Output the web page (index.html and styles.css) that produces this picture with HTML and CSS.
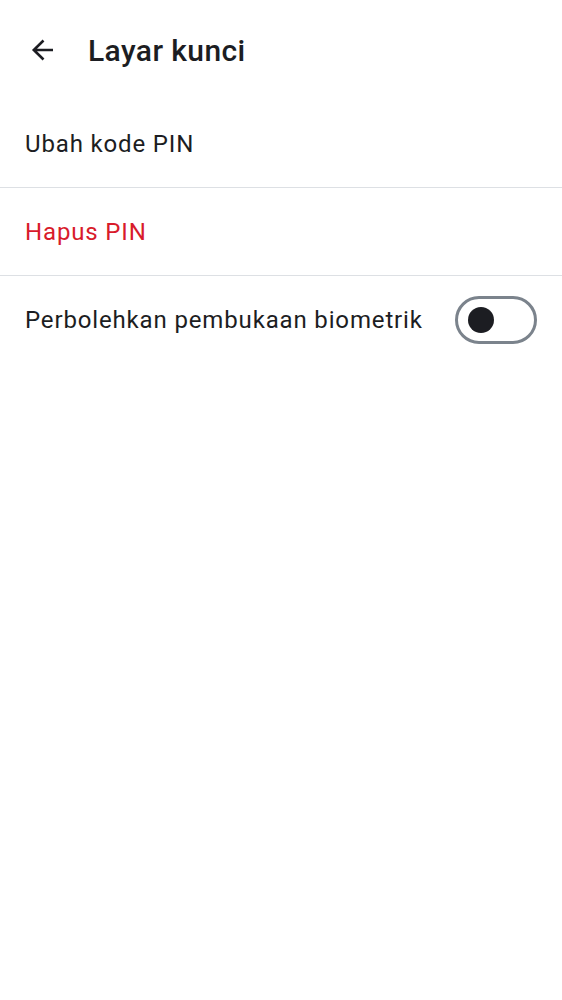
FILE: index.html
```html
<!DOCTYPE html>
<html lang="id">
<head>
<meta charset="utf-8">
<link rel="stylesheet" href="styles.css">
</head>
<body>
<header class="appbar">
  <button class="back" aria-label="Kembali">
    <svg width="24" height="24" viewBox="0 0 24 24"><path d="M22 12H3.5M12.5 2.5L2.8 12l9.7 9.5" fill="none" stroke="#1c1d22" stroke-width="2.6"/></svg>
  </button>
  <h1 class="title">Layar kunci</h1>
</header>
<ul class="list">
  <li class="row">Ubah kode PIN</li>
  <li class="row danger">Hapus PIN</li>
  <li class="row switch-row">
    <span>Perbolehkan pembukaan biometrik</span>
    <span class="switch"><span class="knob"></span></span>
  </li>
</ul>
</body>
</html>
```
FILE: styles.css
```css
* { box-sizing: border-box; }
body {
  margin: 0;
  background: #fff;
  font-family: Roboto, "Noto Sans", sans-serif;
  color: #1c1d22;
}
.appbar {
  height: 100px;
  display: flex;
  align-items: center;
  padding-left: 31px;
  gap: 33px;
}
.back {
  border: 0;
  background: none;
  padding: 0;
  width: 24px;
  height: 24px;
  display: flex;
}
.title {
  margin: 0;
  font-size: 30px;
  font-weight: 500;
  letter-spacing: 0.4px;
}
.list {
  list-style: none;
  margin: 0;
  padding: 0;
}
.row {
  height: 88px;
  display: flex;
  align-items: center;
  padding: 0 25px;
  font-size: 24px;
  letter-spacing: 0.85px;
  border-bottom: 1px solid #dde0e4;
}
.danger { color: #d81b2b; }
.switch-row {
  border-bottom: 0;
  justify-content: space-between;
  padding-right: 25px;
}
.switch {
  width: 82px;
  height: 48px;
  border: 3px solid #7b838c;
  border-radius: 24px;
  display: flex;
  align-items: center;
  padding-left: 10px;
}
.knob {
  width: 26px;
  height: 26px;
  border-radius: 50%;
  background: #1c1d22;
}
```
